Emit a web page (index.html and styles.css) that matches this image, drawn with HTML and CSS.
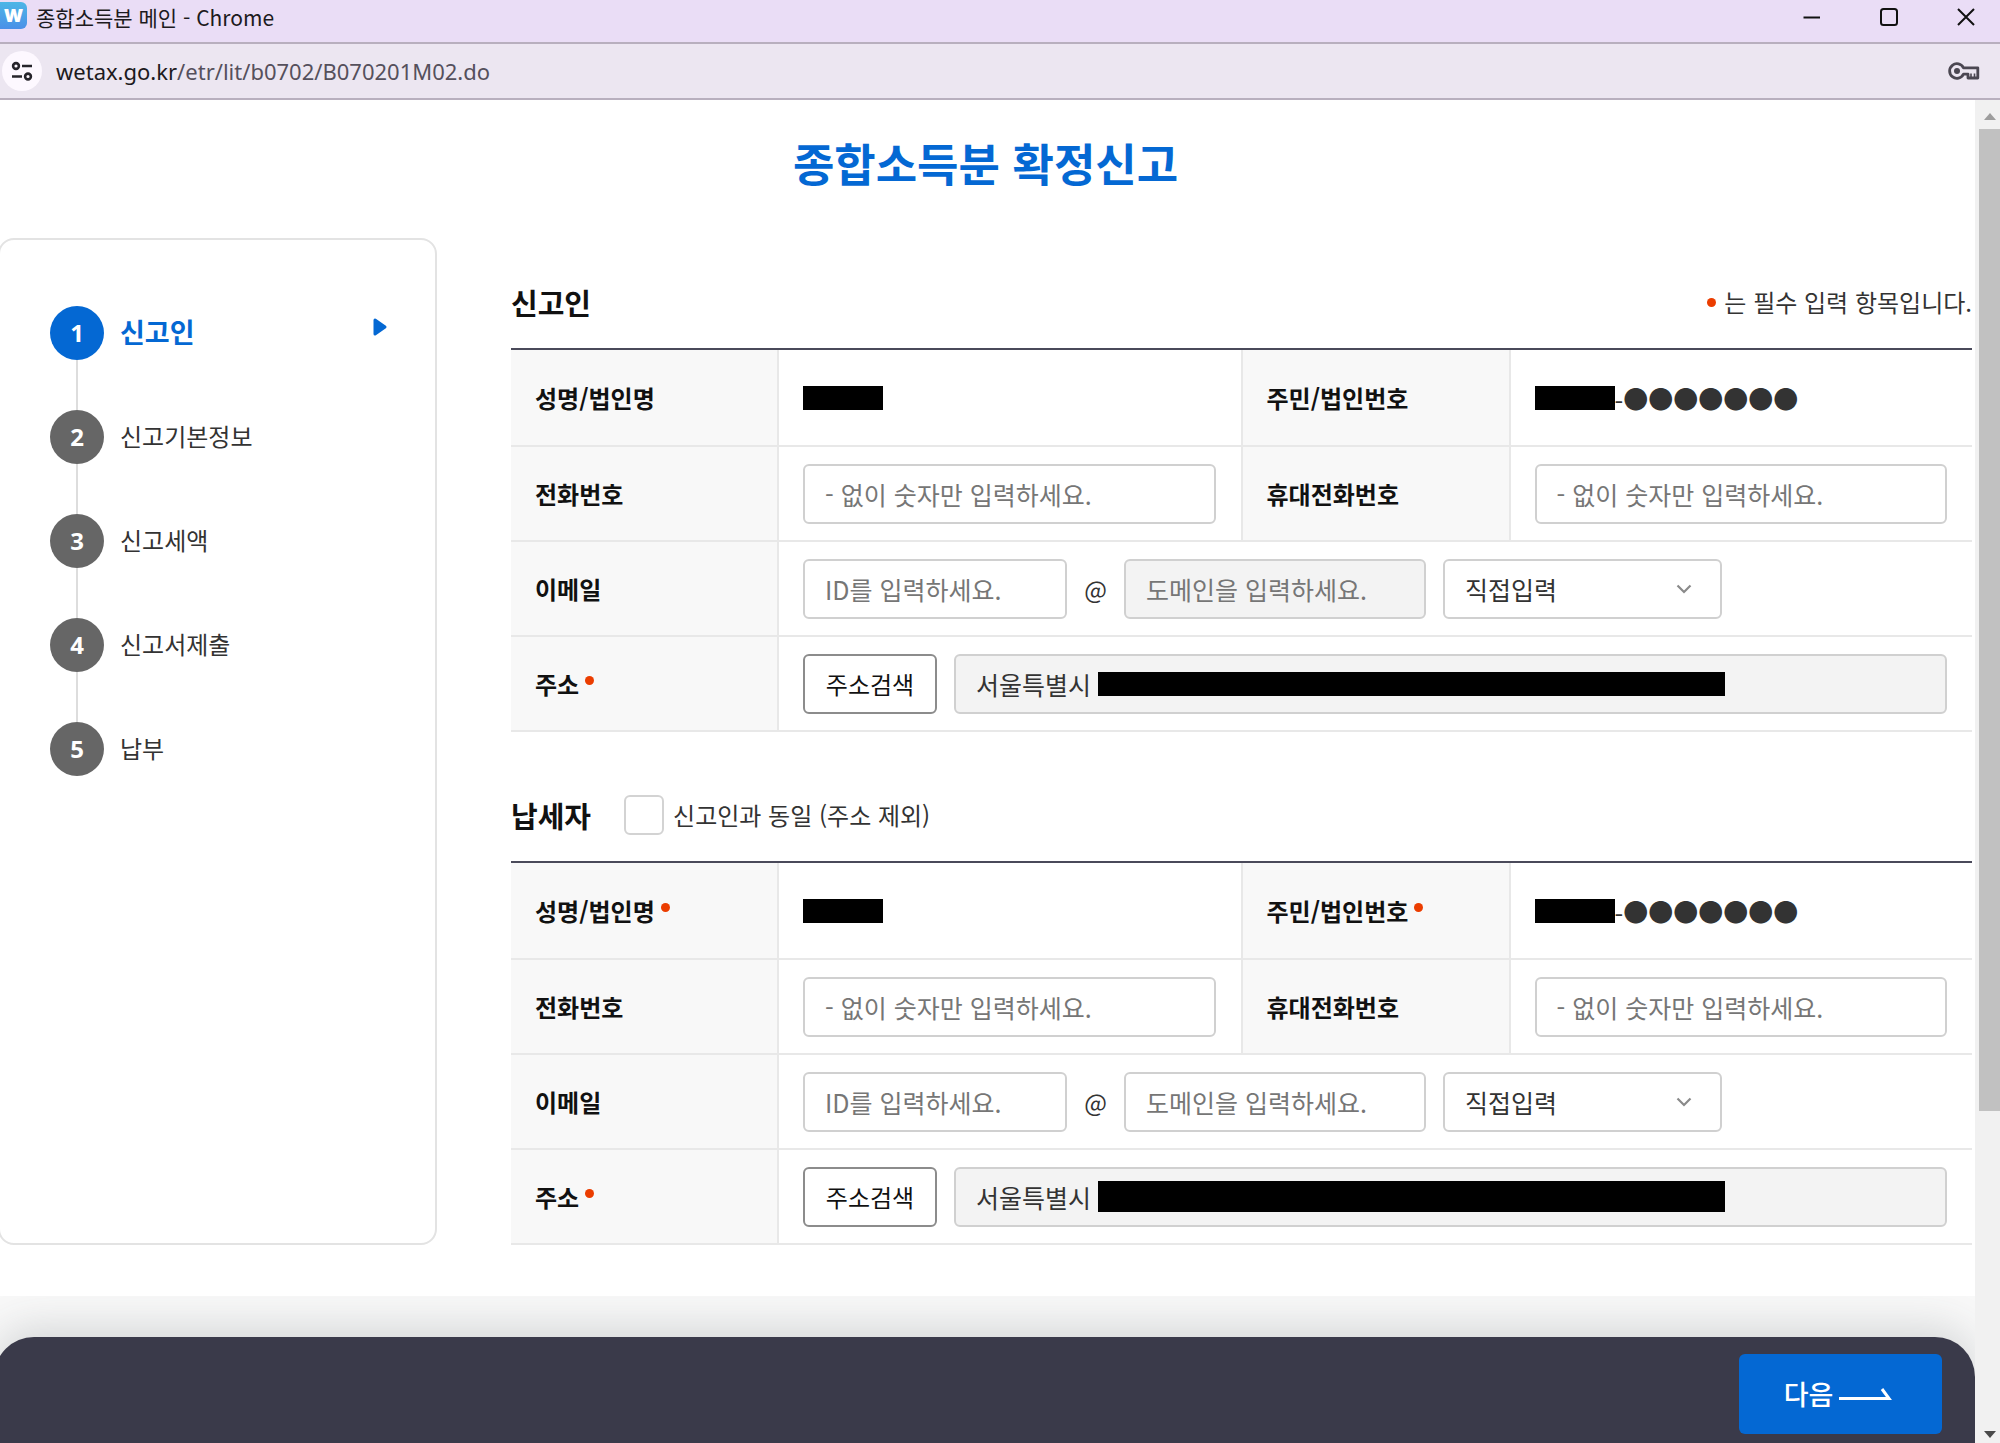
FILE: index.html
```html
<!DOCTYPE html>
<html lang="ko">
<head>
<meta charset="utf-8">
<title>종합소득분 메인</title>
<link rel="stylesheet" href="styles.css">
</head>
<body>
<header class="titlebar">
  <span class="favicon">W</span>
  <span class="window-title">종합소득분 메인 - Chrome</span>
  <div class="window-buttons">
    <button type="button" aria-label="최소화"><svg width="18" height="18" viewBox="0 0 18 18"><path d="M0.500 9.500H17" stroke="#111" stroke-width="2"/></svg></button>
    <button type="button" aria-label="최대화"><svg width="18" height="18" viewBox="0 0 18 18"><rect x="1" y="1" width="16" height="16" rx="2.500" fill="none" stroke="#111" stroke-width="2"/></svg></button>
    <button type="button" aria-label="닫기"><svg width="18" height="18" viewBox="0 0 18 18"><path d="M1 1L17 17M17 1L1 17" stroke="#111" stroke-width="2"/></svg></button>
  </div>
</header>
<div class="urlbar">
  <button type="button" class="site-info" aria-label="사이트 정보"><svg width="22" height="20" viewBox="0 0 22 20" fill="none" stroke="#26242b" stroke-width="2.600"><circle cx="5" cy="5" r="2.900"/><path d="M11 5H21M1 15.500H11"/><circle cx="17" cy="15.500" r="2.900"/></svg></button>
  <span class="url"><b>wetax.go.kr</b>/etr/lit/b0702/B070201M02.do</span>
  <button type="button" class="key" aria-label="비밀번호 관리"><svg width="32" height="18" viewBox="0 0 32 18"><path d="M15.500 5.800A7.300 7.300 0 1 0 15.500 12.200H20V16H29.800V5.800Z" fill="none" stroke="#4b4752" stroke-width="2.800" stroke-linejoin="round"/><circle cx="9" cy="9" r="3" fill="#4b4752"/><path d="M23 15V11.500M26.500 15V11.500" stroke="#4b4752" stroke-width="1.600"/></svg></button>
</div>
<div class="viewport">
  <div class="page">
    <main class="main">
      <h1>종합소득분 확정신고</h1>
      <div class="columns">
        <nav class="steps" aria-label="신고 단계">
          <ol>
            <li class="current"><span class="num">1</span><span class="step-name">신고인</span><svg class="step-arrow" width="14" height="18" viewBox="0 0 14 18"><path d="M2 2V16L12 9Z" fill="#0468d3" stroke="#0468d3" stroke-width="3" stroke-linejoin="round"/></svg></li>
            <li><span class="num">2</span><span class="step-name">신고기본정보</span></li>
            <li><span class="num">3</span><span class="step-name">신고세액</span></li>
            <li><span class="num">4</span><span class="step-name">신고서제출</span></li>
            <li><span class="num">5</span><span class="step-name">납부</span></li>
          </ol>
        </nav>
        <form class="form" id="report">
          <section>
            <div class="section-head">
              <h2>신고인</h2>
              <p class="note"><i class="dot"></i>는 필수 입력 항목입니다.</p>
            </div>
            <table>
              <colgroup><col class="c-first"><col><col class="c-second"><col></colgroup>
              <tr class="names">
                <th scope="row">성명/법인명</th>
                <td><span class="mask"></span></td>
                <th scope="row">주민/법인번호</th>
                <td><div class="field"><span class="mask"></span>-●●●●●●●</div></td>
              </tr>
              <tr>
                <th scope="row"><label for="a-tel">전화번호</label></th>
                <td><input id="a-tel" type="text" placeholder="- 없이 숫자만 입력하세요."></td>
                <th scope="row"><label for="a-mobile">휴대전화번호</label></th>
                <td><input id="a-mobile" type="text" placeholder="- 없이 숫자만 입력하세요."></td>
              </tr>
              <tr>
                <th scope="row"><label for="a-mail">이메일</label></th>
                <td colspan="3"><div class="field">
                  <input id="a-mail" class="mail-id" type="text" placeholder="ID를 입력하세요.">
                  <span class="at">@</span>
                  <input class="mail-domain" type="text" aria-label="도메인" placeholder="도메인을 입력하세요." disabled>
                  <div class="select"><select aria-label="도메인 선택"><option>직접입력</option></select><svg width="16" height="10" viewBox="0 0 16 10"><path d="M1.500 1.500L8 8L14.500 1.500" fill="none" stroke="#8a8a8a" stroke-width="2.200"/></svg></div>
                </div></td>
              </tr>
              <tr>
                <th scope="row"><label for="a-addr">주소</label><i class="dot raised"></i></th>
                <td colspan="3"><div class="field">
                  <button type="button" class="search">주소검색</button>
                  <div class="address"><input id="a-addr" type="text" value="서울특별시" readonly><span class="mask long"></span></div>
                </div></td>
              </tr>
            </table>
          </section>
          <section>
            <div class="section-head">
              <h2>납세자</h2>
              <label class="same"><input type="checkbox">신고인과 동일 (주소 제외)</label>
            </div>
            <table>
              <colgroup><col class="c-first"><col><col class="c-second"><col></colgroup>
              <tr class="names">
                <th scope="row">성명/법인명<i class="dot raised"></i></th>
                <td><span class="mask"></span></td>
                <th scope="row">주민/법인번호<i class="dot raised"></i></th>
                <td><div class="field"><span class="mask"></span>-●●●●●●●</div></td>
              </tr>
              <tr>
                <th scope="row"><label for="b-tel">전화번호</label></th>
                <td><input id="b-tel" type="text" placeholder="- 없이 숫자만 입력하세요."></td>
                <th scope="row"><label for="b-mobile">휴대전화번호</label></th>
                <td><input id="b-mobile" type="text" placeholder="- 없이 숫자만 입력하세요."></td>
              </tr>
              <tr>
                <th scope="row"><label for="b-mail">이메일</label></th>
                <td colspan="3"><div class="field">
                  <input id="b-mail" class="mail-id" type="text" placeholder="ID를 입력하세요.">
                  <span class="at">@</span>
                  <input class="mail-domain" type="text" aria-label="도메인" placeholder="도메인을 입력하세요.">
                  <div class="select"><select aria-label="도메인 선택"><option>직접입력</option></select><svg width="16" height="10" viewBox="0 0 16 10"><path d="M1.500 1.500L8 8L14.500 1.500" fill="none" stroke="#8a8a8a" stroke-width="2.200"/></svg></div>
                </div></td>
              </tr>
              <tr>
                <th scope="row"><label for="b-addr">주소</label><i class="dot raised"></i></th>
                <td colspan="3"><div class="field">
                  <button type="button" class="search">주소검색</button>
                  <div class="address"><input id="b-addr" type="text" value="서울특별시" readonly><span class="mask long tall"></span></div>
                </div></td>
              </tr>
            </table>
          </section>
        </form>
      </div>
    </main>
    <div class="bottom">
      <footer class="actions">
        <button type="submit" form="report" class="next">다음<svg width="54" height="14" viewBox="0 0 54 14"><path d="M0 11.500H50L43 2" fill="none" stroke="#fff" stroke-width="3"/></svg></button>
      </footer>
    </div>
  </div>
  <div class="scrollbar" aria-hidden="true">
    <svg width="12" height="7" viewBox="0 0 12 7"><path d="M6 0L12 7H0Z" fill="#9d9d9d"/></svg>
    <div class="track"><div class="thumb"></div><div class="rest"></div></div>
    <svg width="12" height="7" viewBox="0 0 12 7"><path d="M6 7L12 0H0Z" fill="#4a4a4a"/></svg>
  </div>
</div>
</body>
</html>
```
FILE: styles.css
```css
* { box-sizing: border-box; }

body {
  margin: 0;
  height: 100vh;
  display: flex;
  flex-direction: column;
  overflow: hidden;
  background: #fff;
  color: #333;
  font: 24px/36px "Noto Sans CJK KR", sans-serif;
}

button, input, select { font: inherit; color: inherit; margin: 0; }
button { border: 0; background: none; padding: 0; cursor: pointer; }
svg { display: block; flex: none; }
h1, h2, p, ol { margin: 0; padding: 0; }

/* Window frame */
.titlebar {
  height: 44px;
  flex: none;
  display: flex;
  align-items: flex-start;
  background: #eaddf6;
  border-bottom: 2px solid #b8afbe;
}
.favicon {
  width: 27px;
  height: 27px;
  margin: 2px 9px 0 0;
  border-radius: 0 6px 6px 0;
  background: linear-gradient(#4db6e6, #4a90e8);
  color: #fff;
  font: 900 18px/27px Inter, sans-serif;
  text-align: center;
}
.window-title { font-size: 21px; line-height: 34px; color: #1c1a20; }
.window-buttons { margin: 8px 25px 0 auto; display: flex; gap: 59px; }
.urlbar {
  height: 56px;
  flex: none;
  display: flex;
  align-items: center;
  padding: 0 20px 0 2px;
  background: #ece6f1;
  border-bottom: 2px solid #b8afbe;
}
.site-info {
  width: 40px;
  height: 40px;
  margin-right: 14px;
  border-radius: 50%;
  background: #fdf8ff;
  display: grid;
  place-items: center;
}
.url { flex: 1; font-family: "Noto Sans", sans-serif; font-size: 22px; color: #55505c; }
.url b { font-weight: 400; color: #1c1a20; }

.viewport { flex: 1; min-height: 0; display: flex; }
.page { flex: 1; min-width: 0; display: flex; flex-direction: column; overflow: hidden; }
.scrollbar {
  width: 25px;
  flex: none;
  display: flex;
  flex-direction: column;
  align-items: center;
  padding: 13px 0 5px 4px;
  background: #f1f1f1;
}
.track { flex: 1; align-self: stretch; display: flex; flex-direction: column; padding: 9px 0 20px; }
.thumb { flex: 49; background: #c1c1c1; }
.rest { flex: 15; }

/* Page body */
.main { position: relative; z-index: 1; background: #fff; padding-bottom: 51px; }
h1 {
  padding: 30px 4px 42px 0;
  font-size: 45px;
  line-height: 66px;
  text-align: center;
  color: #0468d3;
}
.columns { display: flex; gap: 74px; padding-right: 3px; }

.steps {
  width: 439px;
  flex: none;
  margin-left: -2px;
  padding: 66px 48px 66px 50px;
  border: 2px solid #e3e3e3;
  border-radius: 16px;
}
.steps ol { list-style: none; display: flex; flex-direction: column; gap: 50px; }
.steps li { display: flex; align-items: center; }
.num {
  position: relative;
  width: 54px;
  height: 54px;
  margin-right: 16px;
  border-radius: 50%;
  background: #666;
  color: #fff;
  font-family: "Noto Sans", sans-serif;
  font-weight: 700;
  line-height: 54px;
  text-align: center;
}
li:not(:last-child) .num::after {
  content: "";
  position: absolute;
  top: 100%;
  left: 26px;
  width: 2px;
  height: 50px;
  background: #ddd;
}
.current .num { background: #0468d3; }
.step-name { padding-bottom: 2px; }
.current .step-name { color: #0468d3; font-size: 27px; font-weight: 700; }
.step-arrow { margin: 0 0 12px auto; }

.form { flex: 1; min-width: 0; padding-top: 44px; display: flex; flex-direction: column; gap: 63px; }
.section-head { display: flex; align-items: center; height: 40px; margin-bottom: 26px; }
h2 { font-size: 29px; line-height: 40px; color: #111; }
.note { margin-left: auto; display: flex; align-items: center; gap: 8px; }
.dot { display: inline-block; width: 9px; height: 9px; border-radius: 50%; background: #eb3d00; }
.raised { margin-left: 6px; vertical-align: 9px; }
.same { margin-left: 33px; display: flex; align-items: center; gap: 9px; }
.same input {
  appearance: none;
  width: 40px;
  height: 40px;
  border: 2px solid #d3d3d3;
  border-radius: 6px;
  background: #fff;
}

table {
  width: 100%;
  table-layout: fixed;
  border-collapse: separate;
  border-spacing: 0;
  border-top: 2px solid #4a4a5a;
}
.c-first { width: 266px; }
.c-second { width: 268px; }
th, td { height: 95px; padding: 0 25px 0 24px; border-bottom: 2px solid #e8e8e8; text-align: left; }
.names th, .names td { height: 97px; }
td { font-size: 25px; }
th { background: #f8f8f8; color: #111; padding-right: 0; line-height: 36px; }
th + td, td + th { border-left: 2px solid #e8e8e8; }
td > input { width: 100%; }
input[type="text"], select {
  display: block;
  height: 60px;
  padding: 0 20px;
  border: 2px solid #d0d0d0;
  border-radius: 6px;
  background: #fff;
}
input::placeholder { color: #767676; opacity: 1; }
input:disabled { background: #f3f3f3; }
.field { display: flex; align-items: center; }
.mail-id { width: 264px; }
.at { width: 57px; font-size: 24px; text-align: center; }
.mail-domain { width: 302px; margin-right: 17px; }
.select { display: grid; align-items: center; width: 279px; }
.select > * { grid-area: 1 / 1; }
.select select { appearance: none; width: 100%; }
.select svg { justify-self: end; margin-right: 30px; pointer-events: none; }
.search {
  width: 134px;
  height: 60px;
  margin-right: 17px;
  border: 2px solid #8c8c8c;
  border-radius: 6px;
  background: #fff;
  color: #111;
  font-size: 24px;
}
.address {
  flex: 1;
  display: flex;
  align-items: center;
  height: 60px;
  padding-left: 20px;
  border: 2px solid #d0d0d0;
  border-radius: 6px;
  background: #f3f3f3;
}
.address input[type="text"] { width: 122px; height: 56px; padding: 0; border: 0; background: none; }
.mask { display: block; width: 80px; height: 24px; background: #000; }
.mask.long { width: 627px; }
.mask.tall { height: 31px; }

/* Bottom action bar */
.bottom { flex: 1; display: flex; padding-top: 41px; background: #f8f8f8; }
.actions {
  flex: 1;
  margin-left: -6px;
  padding: 17px 33px 0 0;
  border-radius: 40px 40px 0 0;
  background: #3a3a4a;
  box-shadow: 0 -10px 40px rgba(60, 70, 80, .18);
}
.next {
  width: 203px;
  height: 80px;
  margin-left: auto;
  padding-right: 4px;
  border-radius: 6px;
  background: #0468d3;
  color: #fff;
  font-size: 27px;
  font-weight: 500;
  display: flex;
  align-items: center;
  justify-content: center;
  gap: 6px;
}
```
